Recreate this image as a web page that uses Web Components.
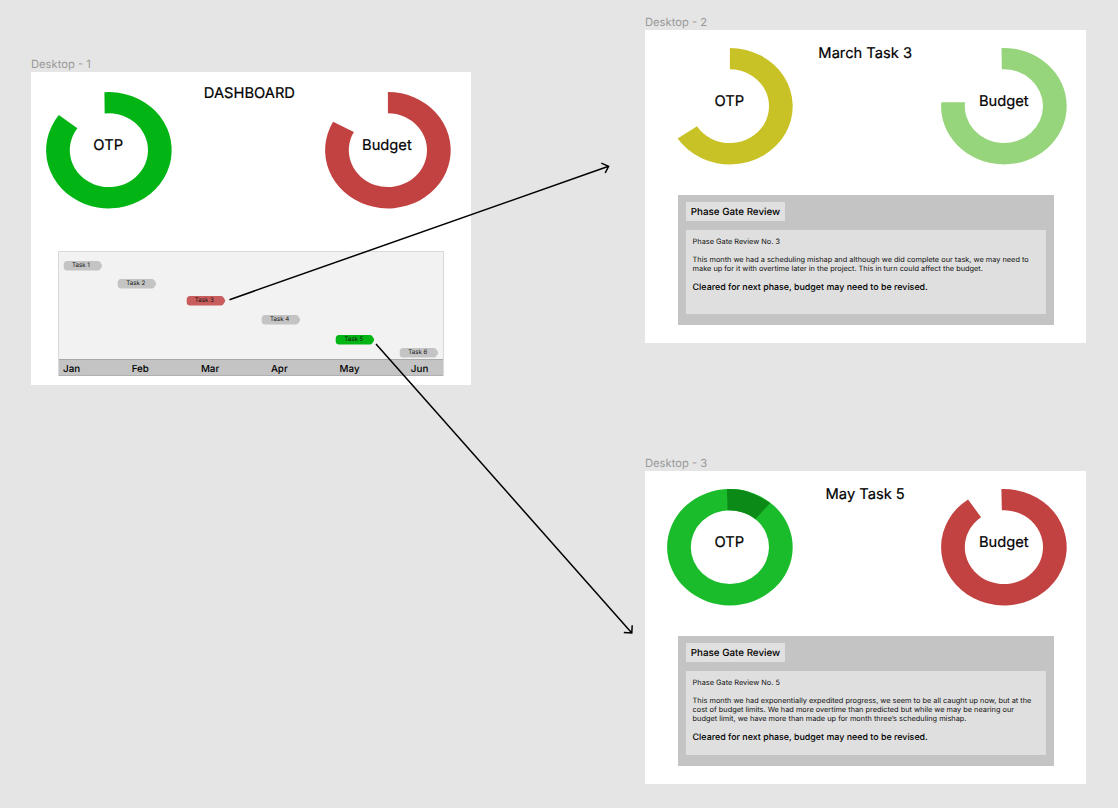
<!DOCTYPE html>
<html lang="en">
<head>
<meta charset="utf-8">
<title>Project dashboard flow</title>
<style>
html, body { margin: 0; }
body { width: 1118px; height: 808px; overflow: hidden; background: #e5e5e5; }
</style>
</head>
<body>
<flow-canvas></flow-canvas>
<script>
function define(name, html, setup) {
  const template = document.createElement('template');
  template.innerHTML = html;
  customElements.define(name, class extends HTMLElement {
    constructor() {
      super();
      this.attachShadow({ mode: 'open' }).append(template.content.cloneNode(true));
    }
    connectedCallback() { if (setup) setup(this, this.shadowRoot); }
  });
}

// Ring segment; "arc" holds outer start/end and inner start/end angles in degrees.
define('ring-chart', `
  <style>
    :host { display: grid; width: 126px; height: 117px; flex: none; }
    svg, span { grid-area: 1 / 1; }
    svg { display: block; overflow: visible; }
    span { place-self: center; transform: translate(var(--lx, -0.6px), var(--ly, -5px)); font-size: 14.7px; line-height: 18px; white-space: nowrap; -webkit-text-stroke: 0.2px #000; }
  </style>
  <svg width="126" height="117" viewBox="-62.9 -58.2 126 117"><path class="main"/><path class="extra"/></svg>
  <span><slot></slot></span>`,
  (el, root) => {
    const pt = (a, rx, ry) => {
      const r = a * Math.PI / 180;
      return (Math.cos(r) * rx).toFixed(2) + ' ' + (Math.sin(r) * ry).toFixed(2);
    };
    const [a, b, c, d] = el.getAttribute('arc').split(' ').map(Number);
    const path = root.querySelector('.main');
    path.setAttribute('fill', el.getAttribute('color'));
    if (b - a >= 360) {
      const ring = (rx, ry) => `M${-rx} 0A${rx} ${ry} 0 1 1 ${rx} 0A${rx} ${ry} 0 1 1 ${-rx} 0Z`;
      path.setAttribute('d', ring(62.8, 58.2) + ring(39.1, 36.9));
      path.setAttribute('fill-rule', 'evenodd');
    } else {
      path.setAttribute('d', `M${pt(a, 62.8, 58.2)}A62.8 58.2 0 1 1 ${pt(b, 62.8, 58.2)}L${pt(d, 39.1, 36.9)}A39.1 36.9 0 1 0 ${pt(c, 39.1, 36.9)}Z`);
    }
    if (el.hasAttribute('overrun')) {
      const e = root.querySelector('.extra');
      e.setAttribute('fill', '#0b8a18');
      e.setAttribute('d', 'M-3 -58.1Q8 -58.6 16 -56.1Q28 -52 40.3 -44.2L25.6 -28.3Q14 -36.8 -2.3 -36.9Z');
    }
  });

define('task-pill', `
  <style>
    :host { display: block; position: relative; width: 39px; height: 9.5px; color: #111; }
    svg { display: block; position: absolute; inset: 0; }
    span { position: relative; display: block; padding-left: 8px; font-size: 6.15px; line-height: 10.2px; white-space: nowrap; }
  </style>
  <svg width="39" height="9.5" viewBox="0.3 0 39 9.5" overflow="visible"><path d="M3.5 0H34Q35.8 0 36.6 1.3L38.1 3.6Q38.8 4.75 38.1 5.9L36.6 8.2Q35.8 9.5 34 9.5H3.5Q0 9.5 0 6V3.5Q0 0 3.5 0Z"/></svg>
  <span><slot></slot></span>`,
  (el, root) => {
    root.querySelector('path').setAttribute('fill', el.getAttribute('color') || '#c4c4c4');
    el.style.marginLeft = el.getAttribute('start') + 'px';
    el.style.marginTop = el.getAttribute('gap') + 'px';
  });

define('task-timeline', `
  <style>
    :host { display: flex; flex-direction: column; box-sizing: border-box; width: 385.5px; height: 125px; background: #f2f2f2; border: 1px solid #d9d9d9; border-bottom: 0; }
    .tasks { height: 107px; flex: none; display: flow-root; }
    .months { height: 17px; flex: none; box-sizing: border-box; background: #c4c4c4; border-top: 1px solid #a8a8a8; border-bottom: 1px solid #b0b0b0; display: grid; grid-template-columns: 68.7px 69.2px 70px 68.7px 71.3px 1fr; padding-left: 4px; align-items: start; font-size: 9.8px; line-height: 20px; font-weight: 500; }
  </style>
  <div class="tasks"><slot></slot></div>
  <div class="months"><span>Jan</span><span>Feb</span><span>Mar</span><span>Apr</span><span>May</span><span>Jun</span></div>`);

define('gate-review', `
  <style>
    :host { display: block; box-sizing: border-box; width: 376px; height: 130px; padding: 7px 8px 0; background: #c4c4c4; }
    h2 { box-sizing: border-box; margin: 0; width: 99px; height: 19px; padding-top: 1px; background: #e0e0e0; font-size: 9.8px; line-height: 19px; font-weight: 500; text-align: center; white-space: nowrap; }
    .body { box-sizing: border-box; margin-top: 9px; height: 84px; padding: 8.1px 6.6px 0; background: #dfdfdf; font-size: 7.36px; line-height: 8.95px; color: #111; white-space: nowrap; }
    .note { font-size: 8.88px; line-height: 11px; font-weight: 500; margin-top: -0.8px; color: #000; }
  </style>
  <h2>Phase Gate Review</h2>
  <div class="body"><slot></slot><div class="note">Cleared for next phase, budget may need to be revised.</div></div>`);

define('desktop-frame', `
  <style>
    :host { display: block; position: absolute; }
    .name { box-sizing: border-box; height: 14px; padding-top: 1px; font-size: 11.2px; line-height: 14px; color: #999; white-space: nowrap; }
    .page { box-sizing: border-box; height: 313px; margin-top: 2px; background: #fff; display: flow-root; }
    .top { display: flex; justify-content: space-between; padding: var(--pad); }
    .title { flex: 1; text-align: center; font-size: 14.7px; line-height: 18px; margin-top: var(--tt); padding-left: var(--tl, 0); padding-right: var(--tr, 0); white-space: nowrap; -webkit-text-stroke: 0.2px #000; }
    .content { margin: var(--content); }
  </style>
  <div class="name"></div>
  <div class="page">
    <div class="top"><slot name="left"></slot><div class="title"><slot name="title"></slot></div><slot name="right"></slot></div>
    <div class="content"><slot></slot></div>
  </div>`,
  (el, root) => { root.querySelector('.name').textContent = el.getAttribute('name'); });

define('flow-arrows', `
  <style>
    :host { display: block; position: absolute; inset: 0; pointer-events: none; }
    svg { display: block; }
  </style>
  <svg width="1118" height="808" fill="none" stroke="#000" stroke-width="1.5">
    <path d="M229.5 299.7L608.6 166.3M601.3 163.1L608.6 166.3L605.2 173"/>
    <path d="M376 344L631.8 633M632.2 625.3L631.8 633L623.8 632.4"/>
  </svg>`);

define('flow-canvas', `
  <style>
    :host { display: block; position: relative; width: 1118px; height: 808px; overflow: hidden; background: #e5e5e5; color: #000; font-family: Inter, "Liberation Sans", sans-serif; text-rendering: geometricPrecision; }
    desktop-frame { width: 441px; --pad: 18px 18.6px 0 22px; --tt: -4px; --tr: 4px; --content: 30px 0 0 33px; left: 645px; --ly: -6px; }
    .one { left: 31px; top: 56px; width: 440px; --pad: 20px 20.5px 0 14.8px; --tt: -7.8px; --tl: 2.5px; --tr: 0px; --content: 42px 0 0 27px; --ly: -6px; }
    .two { top: 14px; height: 330px; }
    .three { top: 455px; }
    p { margin: 0 0 9px; }
  </style>
  <desktop-frame class="one" name="Desktop - 1">
    <ring-chart slot="left" arc="-94.1 217.1 -96.2 216.3" color="#03b415">OTP</ring-chart>
    <span slot="title">DASHBOARD</span>
    <ring-chart slot="right" arc="-90 209.2 -90 209.5" color="#c24141">Budget</ring-chart>
    <task-timeline>
      <task-pill start="5" gap="8.8">Task 1</task-pill>
      <task-pill start="59.2" gap="9">Task 2</task-pill>
      <task-pill start="127.7" gap="7.5" color="#c95c5c">Task 3</task-pill>
      <task-pill start="203" gap="9.5">Task 4</task-pill>
      <task-pill start="277.2" gap="10" color="#03b415">Task 5</task-pill>
      <task-pill start="341.2" gap="3.4">Task 6</task-pill>
    </task-timeline>
  </desktop-frame>
  <desktop-frame class="two" name="Desktop - 2">
    <ring-chart slot="left" arc="-90 146.3 -90 147.3" color="#c9c227">OTP</ring-chart>
    <span slot="title">March Task 3</span>
    <ring-chart slot="right" arc="-92.2 183.9 -93 186.2" color="#96d57b">Budget</ring-chart>
    <gate-review>
      <p>Phase Gate Review No. 3</p>
      <p>This month we had a scheduling mishap and although we did complete our task, we may need to<br>make up for it with overtime later in the project. This in turn could affect the budget.</p>
    </gate-review>
  </desktop-frame>
  <desktop-frame class="three" name="Desktop - 3">
    <ring-chart slot="left" arc="0 360 0 360" color="#1bbc2b" overrun>OTP</ring-chart>
    <span slot="title">May Task 5</span>
    <ring-chart slot="right" arc="-92.3 235.2 -93 234.2" color="#c24141">Budget</ring-chart>
    <gate-review>
      <p>Phase Gate Review No. 5</p>
      <p>This month we had exponentially expedited progress, we seem to be all caught up now, but at the<br>cost of budget limits. We had more overtime than predicted but while we may be nearing our<br>budget limit, we have more than made up for month three’s scheduling mishap.</p>
    </gate-review>
  </desktop-frame>
  <flow-arrows></flow-arrows>`);
</script>
</body>
</html>
